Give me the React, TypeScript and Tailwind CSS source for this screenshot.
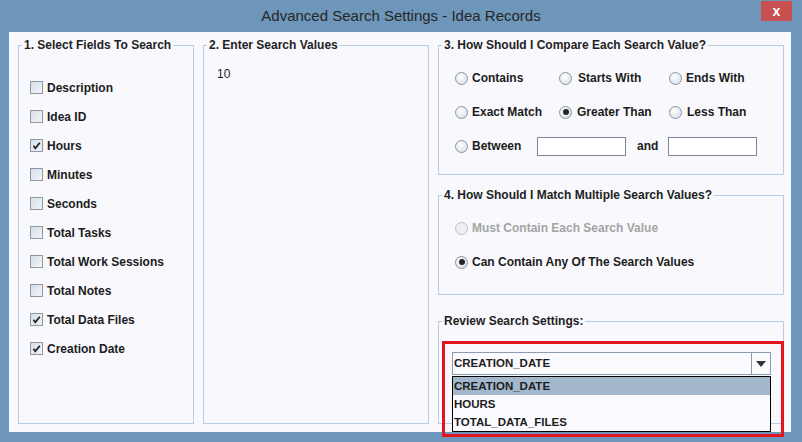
import React from "react";

const FIELDS = [
  { label: "Description", checked: false },
  { label: "Idea ID", checked: false },
  { label: "Hours", checked: true },
  { label: "Minutes", checked: false },
  { label: "Seconds", checked: false },
  { label: "Total Tasks", checked: false },
  { label: "Total Work Sessions", checked: false },
  { label: "Total Notes", checked: false },
  { label: "Total Data Files", checked: true },
  { label: "Creation Date", checked: true },
];

const LEGEND = "ml-[3px] px-[2px] text-[12px] font-bold leading-[14px] text-[#222]";
const FIELDSET = "m-0 min-w-0 border border-[#b7cde3] p-0";

function Check({ checked }: { checked: boolean }) {
  return (
    <span className="flex h-[13px] w-[13px] shrink-0 items-center justify-center border border-[#8e98a4] bg-linear-to-br from-[#d6dee7] to-[#f2f5f8]">
      {checked && (
        <svg width="9" height="9" viewBox="0 0 9 9">
          <path d="M1.5 4.8 L3.3 7.4 L7.8 1.8" stroke="#1e1e1e" strokeWidth="1.7" fill="none" />
        </svg>
      )}
    </span>
  );
}

function Radio({ on, disabled }: { on?: boolean; disabled?: boolean }) {
  return (
    <span
      className={
        disabled
          ? "flex h-[13px] w-[13px] shrink-0 items-center justify-center rounded-full border border-[#b9bfc6] bg-[#eeeff2]"
          : "flex h-[13px] w-[13px] shrink-0 items-center justify-center rounded-full border border-[#8794a2] bg-[radial-gradient(circle_at_40%_35%,#ffffff,#d0d9e3)]"
      }
    >
      {on && <span className="h-[6px] w-[6px] rounded-full bg-[#262626]" />}
    </span>
  );
}

function Opt({ label, on, disabled, className = "" }: { label: string; on?: boolean; disabled?: boolean; className?: string }) {
  return (
    <div className={"flex items-center gap-[4px] " + className}>
      <Radio on={on} disabled={disabled} />
      <span className={disabled ? "text-[12px] font-bold text-[#a4a4a4]" : "text-[12px] font-bold text-[#1c1c1c]"}>{label}</span>
    </div>
  );
}

export default function App() {
  return (
    <div className="relative flex h-[442px] w-[802px] flex-col bg-[#6e96ba] font-['Liberation_Sans',Arial,sans-serif]">
      {/* title bar */}
      <div className="relative flex h-[32px] items-center justify-center">
        <span className="text-[15px] text-[#262626]">Advanced Search Settings - Idea Records</span>
        <button className="absolute right-[10px] top-[1px] flex h-[20px] w-[31px] items-center justify-center bg-[#c75050] text-[14px] font-bold leading-none text-white">
          x
        </button>
      </div>

      {/* client area */}
      <div className="ml-[9px] mr-[11px] flex h-[400px] gap-[9px] bg-[#f9f9fd] pb-[8px] pl-[9px] pr-[7px] pt-[6px]">
        {/* 1 */}
        <fieldset className={FIELDSET + " w-[176px] shrink-0"}>
          <legend className={LEGEND}>1. Select Fields To Search</legend>
          <div className="flex flex-col pl-[11px] pt-[21px]">
            {FIELDS.map((f) => (
              <div key={f.label} className="flex h-[29px] items-center gap-[4px]">
                <Check checked={f.checked} />
                <span className="text-[12px] font-bold text-[#1c1c1c]">{f.label}</span>
              </div>
            ))}
          </div>
        </fieldset>

        {/* 2 */}
        <fieldset className={FIELDSET + " w-[226px] shrink-0"}>
          <legend className={LEGEND}>2. Enter Search Values</legend>
          <div className="pl-[13px] pt-[13px] text-[12px] text-[#1c1c1c]">10</div>
        </fieldset>

        {/* right column */}
        <div className="flex w-[346px] flex-col">
          <fieldset className={FIELDSET + " h-[137px]"}>
            <legend className={LEGEND}>3. How Should I Compare Each Search Value?</legend>
            <div className="flex flex-col pl-[16px] pt-[9px]">
              <div className="flex h-[34px] items-center">
                <Opt label="Contains" className="w-[104px]" />
                <Opt label="Starts With" className="w-[110px] gap-[6px]" />
                <Opt label="Ends With" />
              </div>
              <div className="flex h-[34px] items-center">
                <Opt label="Exact Match" className="w-[104px]" />
                <Opt label="Greater Than" on className="w-[110px] gap-[5px]" />
                <Opt label="Less Than" className="gap-[5px]" />
              </div>
              <div className="flex h-[34px] items-center">
                <Opt label="Between" className="w-[82px]" />
                <div className="h-[19px] w-[89px] border border-[#7c8895] bg-white" />
                <span className="ml-[11px] w-[31px] text-[12px] font-bold text-[#1c1c1c]">and</span>
                <div className="h-[19px] w-[89px] border border-[#7c8895] bg-white" />
              </div>
            </div>
          </fieldset>

          <fieldset className={FIELDSET + " mt-[13px] h-[107px]"}>
            <legend className={LEGEND}>4. How Should I Match Multiple Search Values?</legend>
            <div className="flex flex-col pl-[16px] pt-[9px]">
              <Opt label="Must Contain Each Search Value" disabled className="h-[34px]" />
              <Opt label="Can Contain Any Of The Search Values" on className="h-[34px]" />
            </div>
          </fieldset>

          <fieldset className={FIELDSET + " mt-[19px] h-[110px]"}>
            <legend className={LEGEND}>Review Search Settings:</legend>
            <div className="pl-[13px] pt-[24px]">
              <div className="relative flex h-[23px] w-[319px] border border-[#8d9cac] bg-[#fbfbff]">
                <span className="flex flex-1 items-center pl-[1px] text-[11.5px] font-bold text-[#1c1c1c]">CREATION_DATE</span>
                <span className="flex w-[19px] items-center justify-center border-l border-[#8d9cac]">
                  <svg width="10" height="6" viewBox="0 0 10 6">
                    <path d="M0 0 H10 L5 6 Z" fill="#333" />
                  </svg>
                </span>
                {/* open popup list */}
                <div className="absolute left-[-1px] top-[23px] z-10 flex w-[319px] flex-col border border-black bg-[#fbfbff] text-[11.5px] font-bold text-[#1c1c1c]">
                  <div className="flex h-[18px] items-center bg-[#a3b8cc] pl-[1px] pt-[1px]">CREATION_DATE</div>
                  <div className="flex h-[18px] items-center pl-[1px] pt-[1px]">HOURS</div>
                  <div className="flex h-[18px] items-center pl-[1px] pt-[1px]">TOTAL_DATA_FILES</div>
                </div>
              </div>
            </div>
          </fieldset>
        </div>
      </div>

      {/* red highlight annotation */}
      <div className="pointer-events-none absolute left-[442px] top-[341px] z-20 h-[96px] w-[342px] border-[3px] border-[#e3141d]" />
    </div>
  );
}
